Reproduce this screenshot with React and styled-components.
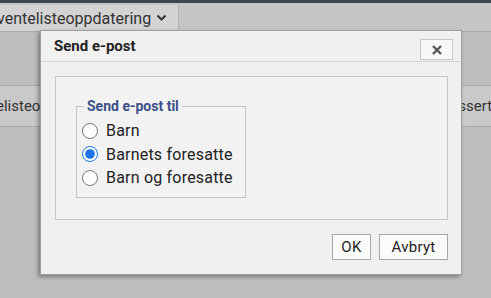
import React, { useState } from "react";
import styled, { createGlobalStyle } from "styled-components";

const GlobalStyle = createGlobalStyle`
  html, body {
    margin: 0;
    padding: 0;
    background: #bebebe;
    font-family: Roboto, "Noto Sans", sans-serif;
  }
`;

const Page = styled.div`
  position: relative;
  width: 491px;
  height: 298px;
  overflow: hidden;
  background: #bdbdbd;
  display: flex;
  flex-direction: column;
`;

const TopBar = styled.div`
  height: 3px;
  background: #3d4650;
`;

const TabStrip = styled.div`
  height: 28px;
  background: #c5c5c5;
  display: flex;
  align-items: flex-end;
  border-bottom: 1px solid #a9a9a9;
`;

const Tab = styled.div`
  height: 26px;
  width: 182px;
  box-sizing: border-box;
  background: #d3d3d3;
  border-right: 1px solid #b0b0b0;
  display: flex;
  align-items: center;
  gap: 5px;
  margin-left: -3px;
  font-size: 16px;
  color: #333;
  white-space: nowrap;
`;

const Content = styled.div`
  flex: 1;
  padding-top: 53px;
`;

const Row = styled.div`
  height: 40px;
  background: #c9c9c9;
  border-top: 1px solid #aaa;
  border-bottom: 1px solid #aaa;
  display: flex;
  align-items: center;
  font-size: 15px;
  color: #333;
  white-space: nowrap;
  overflow: hidden;
`;

const Cell = styled.span`
  margin-left: ${(p) => p.$left}px;
`;

const Dialog = styled.div`
  position: absolute;
  left: 40px;
  top: 30px;
  width: 420px;
  height: 243px;
  background: #f0f0f0;
  border: 1px solid #a0a0a0;
  box-shadow: -2px 2px 4px rgba(0, 0, 0, 0.35);
  display: flex;
  flex-direction: column;
`;

const TitleBar = styled.div`
  height: 30px;
  display: flex;
  align-items: center;
  justify-content: space-between;
  padding: 0 8px 0 13px;
  border-bottom: 1px solid #d4d4d4;
`;

const Title = styled.span`
  font-weight: 700;
  font-size: 15px;
  color: #222;
`;

const CloseButton = styled.button`
  width: 33px;
  height: 21px;
  margin-top: 7px;
  background: #f7f7f7;
  border: 1px solid #c8c8c8;
  display: flex;
  align-items: center;
  justify-content: center;
  padding: 0;
`;

const Body = styled.div`
  flex: 1;
  padding: 14px 13px 0 14px;
  display: flex;
  flex-direction: column;
`;

const Panel = styled.div`
  height: 144px;
  background: #f2f2f2;
  border: 1px solid #c6c6c6;
  padding: 21px 0 0 20px;
  box-sizing: border-box;
`;

const FieldSet = styled.fieldset`
  width: 170px;
  height: 100px;
  box-sizing: border-box;
  margin: 0;
  padding: 0 0 0 5px;
  border: 1px solid #c0c4cc;
`;

const Legend = styled.legend`
  font-weight: 700;
  font-size: 14px;
  color: #3b4f87;
  padding: 0 3px;
  margin-left: 2px;
`;

const Option = styled.label`
  display: flex;
  align-items: center;
  gap: 8px;
  height: 23.5px;
  font-size: 16px;
  letter-spacing: 0.2px;
  color: #222;
  white-space: nowrap;
  margin-top: ${(p) => (p.$first ? "5px" : "0")};
`;

const Radio = styled.input`
  width: 16px;
  height: 16px;
  margin: 0;
  accent-color: #1a73e8;
`;

const Footer = styled.div`
  display: flex;
  justify-content: flex-end;
  gap: 8px;
  padding-top: 14px;
`;

const Button = styled.button`
  height: 26px;
  width: ${(p) => p.$w}px;
  background: #fbfbfb;
  border: 1px solid #a7a7a7;
  font-family: Roboto, "Noto Sans", sans-serif;
  font-size: 15px;
  letter-spacing: 0.3px;
  color: #222;
  padding: 0;
`;

const options = ["Barn", "Barnets foresatte", "Barn og foresatte"];

export default function App() {
  const [valgt, setValgt] = useState(1);

  return (
    <Page>
      <GlobalStyle />
      <TopBar />
      <TabStrip>
        <Tab>
          ventelisteoppdatering
          <svg width="11" height="8" viewBox="0 0 11 8">
            <path d="M1.5 1.5 L5.5 5.5 L9.5 1.5" stroke="#333" strokeWidth="2" fill="none" />
          </svg>
        </Tab>
      </TabStrip>
      <Content>
        <Row>
          <Cell $left={-4}>elisteoppdatering</Cell>
          <Cell $left={315}>Adressert</Cell>
        </Row>
      </Content>

      <Dialog>
        <TitleBar>
          <Title>Send e-post</Title>
          <CloseButton>
            <svg width="12" height="12" viewBox="0 0 12 12">
              <path d="M2 2 L10 10 M10 2 L2 10" stroke="#555" strokeWidth="2.4" />
            </svg>
          </CloseButton>
        </TitleBar>
        <Body>
          <Panel>
            <FieldSet>
              <Legend>Send e-post til</Legend>
              {options.map((o, i) => (
                <Option key={o} $first={i === 0}>
                  <Radio
                    type="radio"
                    name="mottaker"
                    checked={valgt === i}
                    onChange={() => setValgt(i)}
                  />
                  {o}
                </Option>
              ))}
            </FieldSet>
          </Panel>
          <Footer>
            <Button $w={39}>OK</Button>
            <Button $w={69}>Avbryt</Button>
          </Footer>
        </Body>
      </Dialog>
    </Page>
  );
}
